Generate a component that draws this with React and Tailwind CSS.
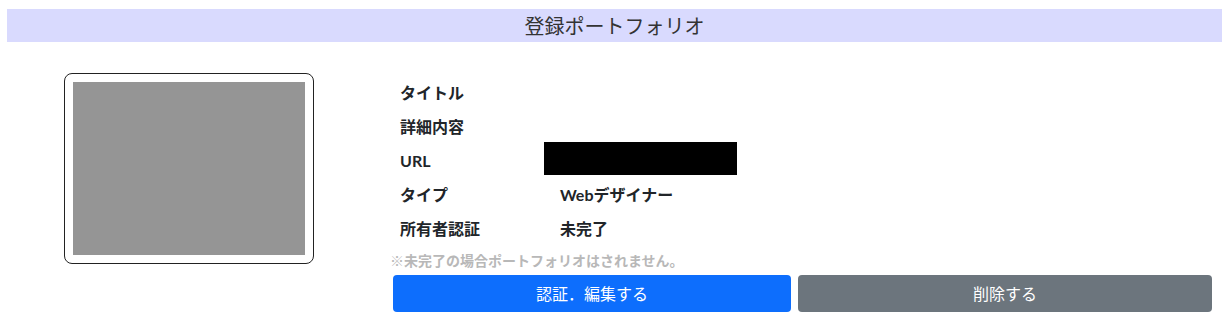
import React from "react";

const rows = [
  { label: "タイトル", value: "" },
  { label: "詳細内容", value: "" },
  { label: "URL", value: null },
  { label: "タイプ", value: "Webデザイナー" },
  { label: "所有者認証", value: "未完了" },
];

const App = () => {
  return (
    <div
      className="bg-white text-[#212529] w-[1231px] h-[327px] overflow-hidden"
      style={{ fontFamily: '"Lato", "Noto Sans CJK JP", sans-serif' }}
    >
      <div className="pt-[9px] px-[7px] pr-[9px]">
        <div className="h-[33px] bg-[#d9dafe] flex items-center justify-center text-[20px] text-[#333]">
          登録ポートフォリオ
        </div>
      </div>

      <div className="flex mt-[31px]">
        <div className="w-[378px] flex justify-center">
          <div className="w-[250px] h-[191px] border border-[#222] rounded-[8px] p-[8px]">
            <div className="w-full h-full bg-[#959595]"></div>
          </div>
        </div>

        <div className="flex-1 pl-[15px] pr-[19px]">
          <div className="pt-[3px]">
            {rows.map((r) => (
              <div key={r.label} className="flex items-center h-[34px] pl-[7px] font-bold text-[16px]">
                <div className="w-[160px]">{r.label}</div>
                {r.value === null ? (
                  <div className="w-[193px] h-[33px] bg-black -ml-[16px] -mt-[6px]"></div>
                ) : (
                  <div>{r.value}</div>
                )}
              </div>
            ))}
          </div>
          <p className="-ml-[3px] mt-[6px] text-[14px] font-bold text-[#b8b8b8] leading-[18px]">
            ※未完了の場合ポートフォリオはされません。
          </p>
          <div className="flex gap-[7px] mt-[5px]">
            <button className="flex-1 h-[37px] rounded-[4px] bg-[#0d6efd] text-white text-[16px]">
              認証．編集する
            </button>
            <button className="w-[414px] h-[37px] rounded-[4px] bg-[#6c757d] text-white text-[16px]">
              削除する
            </button>
          </div>
        </div>
      </div>
    </div>
  );
};

export default App;
